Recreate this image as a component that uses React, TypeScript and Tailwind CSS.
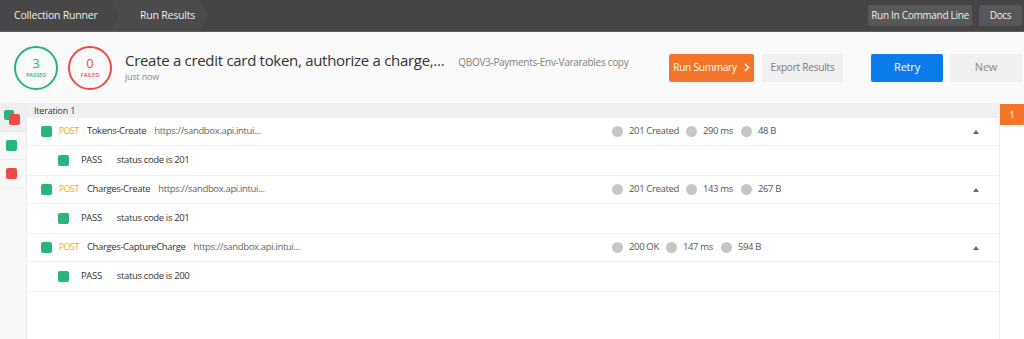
const font = { fontFamily: '"Open Sans", "Noto Sans", sans-serif' };

type Req = {
  name: string;
  status: string;
  time: string;
  size: string;
  test: string;
};

const requests: Req[] = [
  { name: 'Tokens-Create', status: '201 Created', time: '290 ms', size: '48 B', test: 'status code is 201' },
  { name: 'Charges-Create', status: '201 Created', time: '143 ms', size: '267 B', test: 'status code is 201' },
  { name: 'Charges-CaptureCharge', status: '200 OK', time: '147 ms', size: '594 B', test: 'status code is 200' },
];

function Dot() {
  return <span className="inline-block h-[11px] w-[11px] shrink-0 rounded-full bg-[#c6c6c6]" />;
}

function Square({ red, size = 'h-[11px] w-[11px]' }: { red?: boolean; size?: string }) {
  return <span className={`block shrink-0 ${size} rounded-[2px] ${red ? 'bg-[#ed4b48]' : 'bg-[#26b47f]'}`} />;
}

export default function App() {
  return (
    <div className="h-[339px] w-[1024px] overflow-hidden whitespace-nowrap bg-white text-[#333]" style={font}>
      {/* top bar */}
      <div className="flex h-[32px] items-center border-b border-[#5c5c5c] bg-[#454545] text-[10.5px] tracking-[-0.2px] text-[#eeeeee]">
        <div className="flex h-full w-[119px] items-center bg-[#474747] pl-[14px] [clip-path:polygon(0_0,calc(100%-8px)_0,100%_50%,calc(100%-8px)_100%,0_100%)]">
          Collection Runner
        </div>
        <div className="-ml-[8px] flex h-full w-[97px] items-center bg-[#4b4b4b] pl-[29px] [clip-path:polygon(0_0,calc(100%-8px)_0,100%_50%,calc(100%-8px)_100%,0_100%,8px_50%)]">
          Run Results
        </div>
        <div className="ml-auto flex gap-[7px] pr-[2px] text-[10px] tracking-[-0.3px]">
          <button className="h-[21px] w-[104px] rounded-[2px] bg-[#585858]">Run In Command Line</button>
          <button className="h-[21px] w-[43px] rounded-[2px] bg-[#585858]">Docs</button>
        </div>
      </div>

      {/* header */}
      <div className="flex h-[71px] items-center bg-[#fafafa] pl-[14px] pr-[2px]">
        <div className="flex h-[44px] w-[44px] flex-col items-center justify-center rounded-full border-2 border-[#26b47f] text-[#26b47f]">
          <span className="text-[13px] leading-[15px]">3</span>
          <span className="text-[5.5px] font-semibold leading-[8px]">PASSED</span>
        </div>
        <div className="ml-[10px] flex h-[44px] w-[44px] flex-col items-center justify-center rounded-full border-2 border-[#ed4b48] text-[#ed4b48]">
          <span className="text-[13px] leading-[15px]">0</span>
          <span className="text-[5.5px] font-semibold leading-[8px]">FAILED</span>
        </div>
        <div className="ml-[13px] mt-[-2px] flex flex-col">
          <div className="flex items-baseline">
            <span className="text-[15px] leading-[20px] tracking-[-0.3px] text-[#333]">Create a credit card token, authorize a charge,...</span>
            <span className="ml-[14px] text-[10px] tracking-[-0.3px] text-[#808080]">QBOV3-Payments-Env-Vararables copy</span>
          </div>
          <span className="text-[9px] leading-[13px] tracking-[-0.2px] text-[#888]">just now</span>
        </div>
        <div className="ml-auto flex items-center text-[10px] tracking-[-0.2px]">
          <button className="flex h-[28px] w-[85px] items-center justify-center gap-[7px] rounded-[2px] bg-[#f47529] text-white">
            Run Summary
            <svg width="6" height="9" viewBox="0 0 6 9" fill="none" stroke="white" strokeWidth="1.5">
              <path d="M1 1l3.5 3.5L1 8" />
            </svg>
          </button>
          <button className="ml-[8px] h-[28px] w-[81px] rounded-[2px] bg-[#f0f0f0] text-[#7a7a7a]">Export Results</button>
          <button className="ml-[28px] h-[28px] w-[72px] rounded-[2px] bg-[#0b7bec] text-[11px] text-white">Retry</button>
          <button className="ml-[7px] h-[28px] w-[72px] rounded-[2px] bg-[#f0f0f0] text-[11px] text-[#888]">New</button>
        </div>
      </div>

      {/* body */}
      <div className="flex h-[236px]">
        <div className="w-[27px] shrink-0 border-r border-[#ececec] bg-[#f8f8f8]">
          <div className="relative h-[29px] border-b border-[#ececec] bg-[#efefef]">
            <span className="absolute left-[4px] top-[7px]"><Square size="h-[10px] w-[10px]" /></span>
            <span className="absolute left-[9px] top-[11px]"><Square red size="h-[11px] w-[11px]" /></span>
          </div>
          <div className="flex h-[28px] items-center border-b border-[#ececec] pl-[6px]">
            <Square />
          </div>
          <div className="flex h-[28px] items-center border-b border-[#ececec] pl-[6px]">
            <Square red />
          </div>
        </div>

        <div className="flex-1">
          <div className="flex h-[15px] items-center bg-[#f0f0f0] pl-[7px] text-[9px] tracking-[-0.2px] text-[#333]">Iteration 1</div>
          {requests.map((r) => (
            <div key={r.name}>
              <div className="flex h-[28px] items-center border-b border-[#f0f0f0] pl-[14px] pr-[20px] text-[9.5px] tracking-[-0.35px]">
                <div className="flex w-[571px] shrink-0 items-center">
                  <Square />
                  <span className="ml-[7px] text-[8.5px] tracking-[-0.3px] text-[#f5a623]">POST</span>
                  <span className="ml-[8px] text-[#333]">{r.name}</span>
                  <span className="ml-[8px] text-[#666]">https://sandbox.api.intui...</span>
                </div>
                <div className="flex items-center text-[#555]">
                  <Dot />
                  <span className="ml-[6px]">{r.status}</span>
                  <span className="ml-[7px] flex"><Dot /></span>
                  <span className="ml-[6px]">{r.time}</span>
                  <span className="ml-[8px] flex"><Dot /></span>
                  <span className="ml-[6px]">{r.size}</span>
                </div>
                <svg className="ml-auto" width="6" height="4" viewBox="0 0 6 4">
                  <path d="M0 4L3 0L6 4z" fill="#666" />
                </svg>
              </div>
              <div className="flex h-[30px] items-center border-b border-[#f0f0f0] pl-[31px] text-[9.5px] tracking-[-0.35px] text-[#333]">
                <Square />
                <span className="ml-[12px]">PASS</span>
                <span className="ml-[15px]">{r.test}</span>
              </div>
            </div>
          ))}
        </div>

        <div className="w-[25px] shrink-0 border-l border-[#ececec]">
          <div className="mt-[1px] flex h-[21px] items-center justify-center bg-[#f47529] text-[9px] text-white">1</div>
        </div>
      </div>
    </div>
  );
}
